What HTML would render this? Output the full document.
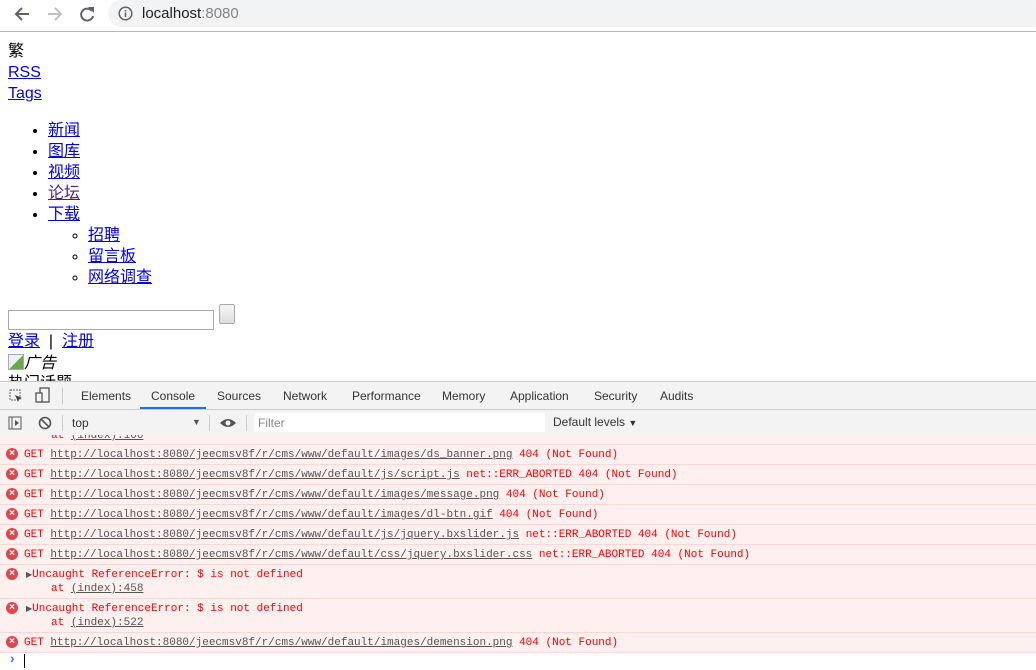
<!DOCTYPE html><html><head><meta charset="utf-8"><style>
*{box-sizing:border-box}body{margin:0;width:1036px;height:670px;overflow:hidden;background:#fff;position:relative;font-family:"Liberation Sans","Noto Sans CJK SC",sans-serif}
.chrome{position:absolute;left:0;top:0;width:1036px;height:32px;background:#fff;border-bottom:1px solid #b8b8b8}
.pill{position:absolute;left:108px;top:0;width:940px;height:27px;background:#f1f3f4;border-radius:14px}
.url{position:absolute;left:142px;top:5px;font-size:15px;color:#202124}
.page{position:absolute;left:8px;top:41px;font-size:16px;line-height:21px;color:#000}
a{color:#00e;text-decoration:underline}
.abs{position:absolute}
.dt{position:absolute;left:0;top:381px;width:1036px;height:289px;background:#fff;border-top:1px solid #ccc}
.tabs{height:28px;background:#f3f3f3;border-bottom:1px solid #ccc;font-size:12px;color:#333;position:relative}
.tabs span{position:absolute;top:7px}
.tb{height:26px;background:#f3f3f3;border-bottom:1px solid #ccc;position:relative;font-size:12px;color:#333}
.con{position:absolute;left:0;top:435px;width:1036px;font-family:"Liberation Mono",monospace;font-size:11px;color:#f00}
.r{position:absolute;left:0;width:1036px;background:#fff0f0;border-bottom:1px solid #ffd6d6}
.ic{position:absolute;left:6px;width:12px;height:12px;border-radius:50%;background:#e0474c;color:#fff;font-size:10px;line-height:12px;text-align:center;font-family:"Liberation Sans",sans-serif;font-weight:bold}
.t{position:absolute;left:24px;white-space:pre}
.u{color:#545454;text-decoration:underline}
</style></head><body>
<div class="chrome">
<svg class="abs" style="left:12px;top:5px" width="20" height="18" viewBox="0 0 20 18"><path d="M17 9H4M10 3L4 9l6 6" stroke="#5f6368" stroke-width="2" fill="none"/></svg>
<svg class="abs" style="left:45px;top:5px" width="20" height="18" viewBox="0 0 20 18"><path d="M3 9h13M10 3l6 6-6 6" stroke="#bdc1c6" stroke-width="2" fill="none"/></svg>
<svg class="abs" style="left:78px;top:5px" width="18" height="18" viewBox="0 0 18 18"><path d="M14 6A6 6 0 1 0 15 11" stroke="#5f6368" stroke-width="2" fill="none"/><path d="M10 2h6v6z" fill="#5f6368"/></svg>
<div class="pill"></div>
<svg class="abs" style="left:118px;top:6px" width="15" height="15" viewBox="0 0 15 15"><circle cx="7.5" cy="7.5" r="6.3" stroke="#5f6368" stroke-width="1.5" fill="none"/><path d="M7.5 6.5v4.5M7.5 4v1.5" stroke="#5f6368" stroke-width="1.6"/></svg>
<div class="url">localhost<span style="color:#80868b">:8080</span></div>
</div>
<div class="page">
<div>繁</div><div><a>RSS</a></div><div><a>Tags</a></div>
<ul style="margin:16px 0;padding-left:40px"><li><a>新闻</a></li><li><a>图库</a></li><li><a>视频</a></li><li><a style="color:#551a8b">论坛</a></li><li><a>下载</a>
<ul style="list-style:circle;padding-left:40px;margin:0"><li><a>招聘</a></li><li><a>留言板</a></li><li><a>网络调查</a></li></ul></li></ul>
</div>
<div class="abs" style="left:8px;top:310px;width:206px;height:20px;border:1px solid #a9a9a9"></div>
<div class="abs" style="left:219px;top:304px;width:16px;height:20px;border:1px solid #a9a9a9;border-radius:2px;background:linear-gradient(#f6f6f6,#ddd)"></div>
<div class="abs" style="left:8px;top:331px;font-size:16px;line-height:21px"><a>登录</a> &nbsp;| &nbsp;<a>注册</a></div>
<div class="abs" style="left:8px;top:353px;font-size:16px;font-style:italic;line-height:21px"><span style="display:inline-block;width:16px;height:16px;border:1px solid #aaa;background:linear-gradient(135deg,#eef 50%,#6a4 50%);vertical-align:-2px"></span>广告</div>
<div class="abs" style="left:8px;top:373px;font-size:16px;line-height:21px">热门话题</div>
<div class="dt">
<div class="tabs">
<svg class="abs" style="left:9px;top:7px" width="14" height="14"><rect x="1" y="1" width="10" height="10" fill="none" stroke="#666" stroke-dasharray="2 1"/><path d="M6 6l7 3-3 1-1 3z" fill="#444"/></svg>
<svg class="abs" style="left:35px;top:5px" width="16" height="16"><rect x="5" y="1" width="9" height="14" fill="none" stroke="#555" stroke-width="1.3"/><rect x="1" y="6" width="6" height="9" fill="#f3f3f3" stroke="#555" stroke-width="1.3"/></svg>
<div class="abs" style="left:62px;top:6px;width:1px;height:16px;background:#ccc"></div>
<span style="left:81px">Elements</span><span style="left:151px">Console</span><span style="left:217px">Sources</span><span style="left:283px">Network</span><span style="left:352px">Performance</span><span style="left:442px">Memory</span><span style="left:510px">Application</span><span style="left:594px">Security</span><span style="left:660px">Audits</span>
<div class="abs" style="left:140px;top:25px;width:66px;height:2px;background:#1a73e8"></div>
</div>
<div class="tb">
<svg class="abs" style="left:8px;top:6px" width="14" height="14"><rect x="1" y="1" width="12" height="12" fill="none" stroke="#555"/><path d="M4 1v12" stroke="#555"/><path d="M7 4l4 3-4 3z" fill="#555"/></svg>
<svg class="abs" style="left:38px;top:6px" width="14" height="14"><circle cx="7" cy="7" r="5.5" fill="none" stroke="#555" stroke-width="1.6"/><path d="M3 3l8 8" stroke="#555" stroke-width="1.6"/></svg>
<div class="abs" style="left:62px;top:5px;width:1px;height:16px;background:#ccc"></div>
<span class="abs" style="left:72px;top:6px">top</span><span class="abs" style="left:192px;top:7px;font-size:9px;color:#555">▼</span>
<div class="abs" style="left:209px;top:5px;width:1px;height:16px;background:#ccc"></div>
<svg class="abs" style="left:219px;top:6px" width="18" height="14"><path d="M1 7Q9-1 17 7Q9 15 1 7z" fill="#555"/><circle cx="9" cy="7" r="2.5" fill="#f3f3f3"/></svg>
<div class="abs" style="left:246px;top:5px;width:1px;height:16px;background:#ccc"></div>
<div class="abs" style="left:254px;top:3px;width:291px;height:19px;background:#fff"></div>
<span class="abs" style="left:258px;top:6px;color:#888">Filter</span>
<span class="abs" style="left:553px;top:5px;color:#333">Default levels <span style="font-size:9px">▼</span></span>
</div>
</div>
<div class="con">
<div class="r" style="top:0;height:10px;overflow:hidden"><div class="t" style="left:51px;top:-5px">at <span class="u">(index):100</span></div></div>
<div class="r" style="top:10px;height:20px"><div class="ic" style="top:3px">×</div><div class="t" style="top:4px">GET <span class="u">http://localhost:8080/jeecmsv8f/r/cms/www/default/images/ds_banner.png</span> 404 (Not Found)</div></div>
<div class="r" style="top:30px;height:20px"><div class="ic" style="top:3px">×</div><div class="t" style="top:4px">GET <span class="u">http://localhost:8080/jeecmsv8f/r/cms/www/default/js/script.js</span> net::ERR_ABORTED 404 (Not Found)</div></div>
<div class="r" style="top:50px;height:20px"><div class="ic" style="top:3px">×</div><div class="t" style="top:4px">GET <span class="u">http://localhost:8080/jeecmsv8f/r/cms/www/default/images/message.png</span> 404 (Not Found)</div></div>
<div class="r" style="top:70px;height:20px"><div class="ic" style="top:3px">×</div><div class="t" style="top:4px">GET <span class="u">http://localhost:8080/jeecmsv8f/r/cms/www/default/images/dl-btn.gif</span> 404 (Not Found)</div></div>
<div class="r" style="top:90px;height:20px"><div class="ic" style="top:3px">×</div><div class="t" style="top:4px">GET <span class="u">http://localhost:8080/jeecmsv8f/r/cms/www/default/js/jquery.bxslider.js</span> net::ERR_ABORTED 404 (Not Found)</div></div>
<div class="r" style="top:110px;height:20px"><div class="ic" style="top:3px">×</div><div class="t" style="top:4px">GET <span class="u">http://localhost:8080/jeecmsv8f/r/cms/www/default/css/jquery.bxslider.css</span> net::ERR_ABORTED 404 (Not Found)</div></div>
<div class="r" style="top:130px;height:34px"><div class="ic" style="top:3px">×</div><div class="t" style="left:26px;top:4px"><span style="font-size:8px;color:#555">▶</span>Uncaught ReferenceError: $ is not defined</div><div class="t" style="left:51px;top:18px">at <span class="u">(index):458</span></div></div>
<div class="r" style="top:164px;height:34px"><div class="ic" style="top:3px">×</div><div class="t" style="left:26px;top:4px"><span style="font-size:8px;color:#555">▶</span>Uncaught ReferenceError: $ is not defined</div><div class="t" style="left:51px;top:18px">at <span class="u">(index):522</span></div></div>
<div class="r" style="top:198px;height:20px"><div class="ic" style="top:3px">×</div><div class="t" style="top:4px">GET <span class="u">http://localhost:8080/jeecmsv8f/r/cms/www/default/images/demension.png</span> 404 (Not Found)</div></div>
<div class="abs" style="left:8px;top:217px;color:#367cf1;font-weight:bold;font-size:14px">›</div>
<div class="abs" style="left:24px;top:219px;width:1px;height:14px;background:#000"></div>
</div>
</body></html>
